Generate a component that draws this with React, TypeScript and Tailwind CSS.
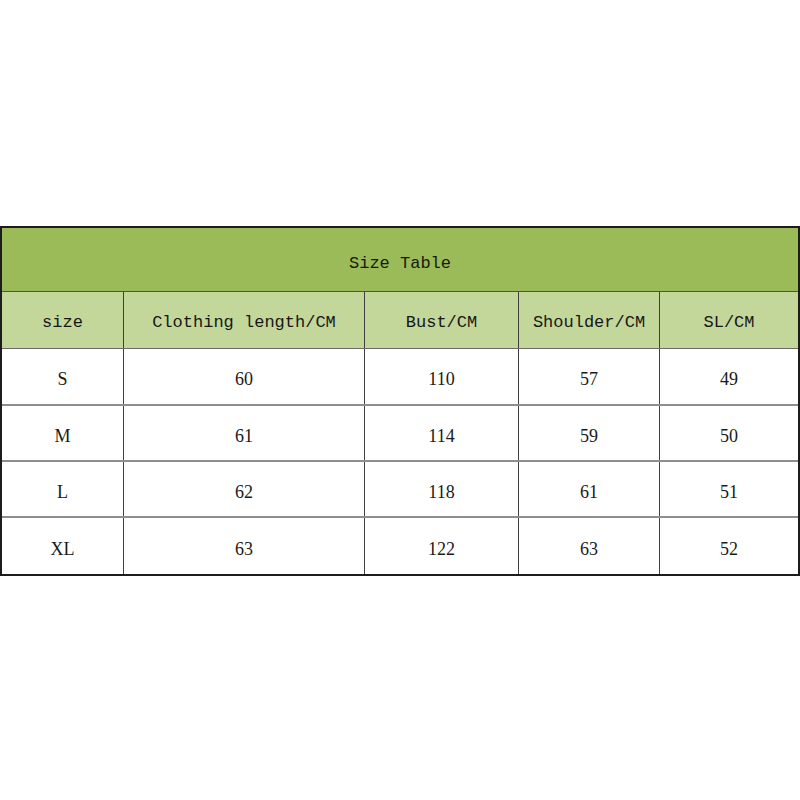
const columns = ["size", "Clothing length/CM", "Bust/CM", "Shoulder/CM", "SL/CM"];

const rows = [
  { size: "S", values: ["60", "110", "57", "49"], h: "h-[57px]" },
  { size: "M", values: ["61", "114", "59", "50"], h: "h-[56px]" },
  { size: "L", values: ["62", "118", "61", "51"], h: "h-[56px]" },
  { size: "XL", values: ["63", "122", "63", "52"], h: "h-[56px]" },
];

const grid = "grid grid-cols-[122px_241px_154px_141px_1fr]";

export default function App() {
  return (
    <div className="w-[800px] h-[800px] bg-white pt-[226px]">
      <div className="w-[800px] border-2 border-[#1c1c1c]">
        <div className="h-[64px] bg-[#9bbb59] border-b border-[#4a5a2c] flex items-center justify-center pt-[8px]">
          <span className="font-['Liberation_Mono',monospace] text-[17px] text-[#141a0c]">
            Size Table
          </span>
        </div>
        <div className={`${grid} h-[57px] bg-[#c4d79b] border-b border-[#6b6b6b]`}>
          {columns.map((c, i) => (
            <div
              key={c}
              className={`flex items-center justify-center pt-[6px] font-['Liberation_Mono',monospace] text-[17px] text-[#161616] ${
                i < columns.length - 1 ? "border-r border-[#3f3f3f]" : ""
              }`}
            >
              {c}
            </div>
          ))}
        </div>
        {rows.map((r, ri) => (
          <div
            key={r.size}
            className={`${grid} ${r.h} ${ri < rows.length - 1 ? "border-b-2 border-[#8e8e8e]" : ""}`}
          >
            {[r.size, ...r.values].map((v, i) => (
              <div
                key={i}
                className={`flex items-center justify-center pt-[6px] font-['Liberation_Serif',serif] text-[18px] text-[#1a1a1a] ${
                  i < 4 ? "border-r border-[#3f3f3f]" : ""
                }`}
              >
                {v}
              </div>
            ))}
          </div>
        ))}
      </div>
    </div>
  );
}
